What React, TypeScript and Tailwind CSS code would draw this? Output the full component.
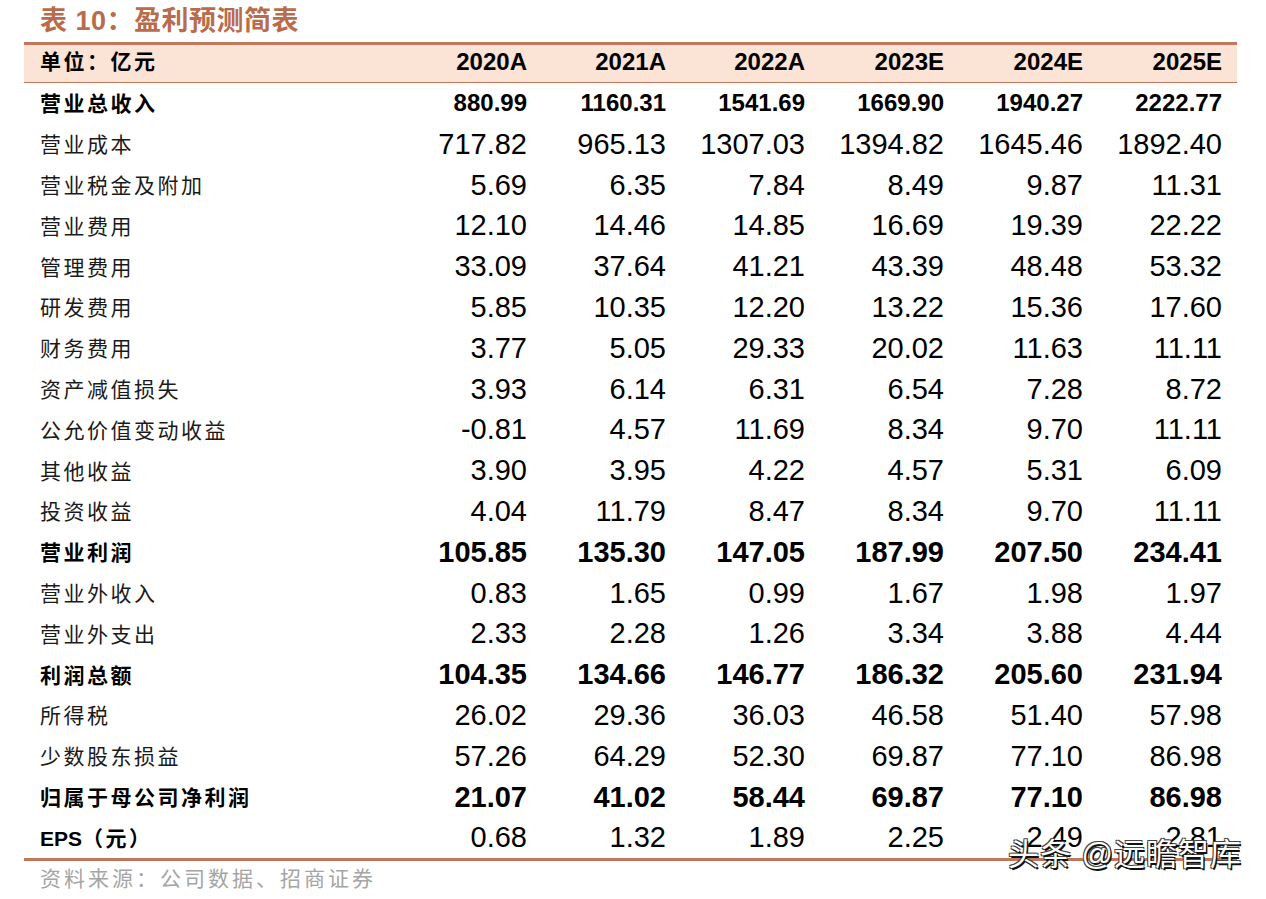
const rows: { label: string; values: string[]; kind: "total" | "bold" | "normal" | "eps" }[] = [
  { label: "营业总收入", values: ["880.99", "1160.31", "1541.69", "1669.90", "1940.27", "2222.77"], kind: "total" },
  { label: "营业成本", values: ["717.82", "965.13", "1307.03", "1394.82", "1645.46", "1892.40"], kind: "normal" },
  { label: "营业税金及附加", values: ["5.69", "6.35", "7.84", "8.49", "9.87", "11.31"], kind: "normal" },
  { label: "营业费用", values: ["12.10", "14.46", "14.85", "16.69", "19.39", "22.22"], kind: "normal" },
  { label: "管理费用", values: ["33.09", "37.64", "41.21", "43.39", "48.48", "53.32"], kind: "normal" },
  { label: "研发费用", values: ["5.85", "10.35", "12.20", "13.22", "15.36", "17.60"], kind: "normal" },
  { label: "财务费用", values: ["3.77", "5.05", "29.33", "20.02", "11.63", "11.11"], kind: "normal" },
  { label: "资产减值损失", values: ["3.93", "6.14", "6.31", "6.54", "7.28", "8.72"], kind: "normal" },
  { label: "公允价值变动收益", values: ["-0.81", "4.57", "11.69", "8.34", "9.70", "11.11"], kind: "normal" },
  { label: "其他收益", values: ["3.90", "3.95", "4.22", "4.57", "5.31", "6.09"], kind: "normal" },
  { label: "投资收益", values: ["4.04", "11.79", "8.47", "8.34", "9.70", "11.11"], kind: "normal" },
  { label: "营业利润", values: ["105.85", "135.30", "147.05", "187.99", "207.50", "234.41"], kind: "bold" },
  { label: "营业外收入", values: ["0.83", "1.65", "0.99", "1.67", "1.98", "1.97"], kind: "normal" },
  { label: "营业外支出", values: ["2.33", "2.28", "1.26", "3.34", "3.88", "4.44"], kind: "normal" },
  { label: "利润总额", values: ["104.35", "134.66", "146.77", "186.32", "205.60", "231.94"], kind: "bold" },
  { label: "所得税", values: ["26.02", "29.36", "36.03", "46.58", "51.40", "57.98"], kind: "normal" },
  { label: "少数股东损益", values: ["57.26", "64.29", "52.30", "69.87", "77.10", "86.98"], kind: "normal" },
  { label: "归属于母公司净利润", values: ["21.07", "41.02", "58.44", "69.87", "77.10", "86.98"], kind: "bold" },
  { label: "EPS（元）", values: ["0.68", "1.32", "1.89", "2.25", "2.49", "2.81"], kind: "eps" },
];

const years = ["2020A", "2021A", "2022A", "2023E", "2024E", "2025E"];

const cjk = "font-['Liberation_Sans','Noto_Sans_CJK_SC',sans-serif]";
const num = "font-['Liberation_Sans',Arial,sans-serif]";

export default function App() {
  return (
    <div className="relative w-[1266px] h-[899px] bg-white pt-[5px] text-black">
      <h1 className={`${cjk} pl-[40px] text-[27px] leading-[33px] font-bold text-[#b86c4c] tracking-[0.5px]`}>
        表 10：盈利预测简表
      </h1>

      <div className="mt-[4px] ml-[24px] w-[1213px] border-t-[3px] border-b-[3px] border-[#c0775b]">
        {/* header band */}
        <div className="grid grid-cols-[364px_repeat(6,139px)] h-[38px] items-center bg-[#fbe3d5] border-b border-[#c0775b]">
          <div className={`${cjk} pl-[16px] -mt-[3px] text-[21px] font-bold tracking-[2.5px]`}>单位：亿元</div>
          {years.map((y) => (
            <div key={y} className={`${num} -mt-[3px] text-right text-[24px] font-bold`}>
              {y}
            </div>
          ))}
        </div>

        {rows.map((row) => (
          <div key={row.label} className="grid grid-cols-[364px_repeat(6,139px)] h-[40.8px] items-center">
            {row.kind === "eps" ? (
              <div className={`${cjk} pl-[16px] text-[21px] font-bold`}>
                EPS<span className="tracking-[2.5px]">（元）</span>
              </div>
            ) : (
              <div
                className={`${cjk} pl-[16px] text-[21px] tracking-[2.5px] ${
                  row.kind === "normal" ? "font-normal text-[#1a1a1a]" : "font-bold"
                }`}
              >
                {row.label}
              </div>
            )}
            {row.values.map((v, i) => (
              <div
                key={i}
                className={`${num} text-right -mt-[1px] ${
                  row.kind === "total"
                    ? "text-[24px] font-bold"
                    : row.kind === "bold"
                    ? "text-[29px] font-bold"
                    : "text-[29px] font-normal"
                }`}
              >
                {v}
              </div>
            ))}
          </div>
        ))}
      </div>

      <p className={`${cjk} pl-[40px] mt-[3px] text-[21px] leading-[30px] text-[#a5a5a5] tracking-[3px]`}>
        资料来源：公司数据、招商证券
      </p>

      {/* watermark */}
      <div
        className={`absolute left-[1008px] top-[837px] ${cjk} text-[31px] leading-[36px] text-white tracking-[1px] [text-shadow:1.5px_1.5px_0_#111,-1px_-1px_0_#444,1px_-1px_0_#444,-1px_1px_0_#444]`}
      >
        头条 @远瞻智库
      </div>
    </div>
  );
}
